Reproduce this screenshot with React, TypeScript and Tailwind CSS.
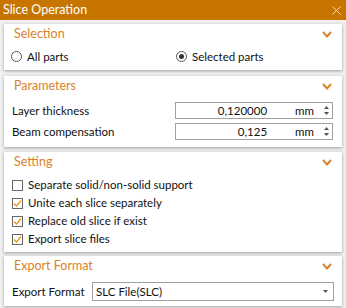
import React from "react";

const Chevron = () => (
  <svg width="10" height="7" viewBox="0 0 10 7" className="block">
    <path d="M1 1 L5 5.5 L9 1" fill="none" stroke="#d9822b" strokeWidth="2" />
  </svg>
);

const Panel = ({ title, children }: { title: string; children: React.ReactNode }) => (
  <div className="mx-[4px] bg-white shadow-[0_1px_3px_rgba(0,0,0,0.35)]">
    <div className="flex items-center justify-between pl-[10px] pr-[10px] h-[20px]">
      <span className="text-[12.5px] text-[#d9822b]">{title}</span>
      <Chevron />
    </div>
    {children}
  </div>
);

const Radio = ({ checked }: { checked?: boolean }) => (
  <span className="w-[11px] h-[11px] rounded-full border border-[#555] flex items-center justify-center bg-white">
    {checked && <span className="w-[5px] h-[5px] rounded-full bg-[#333]" />}
  </span>
);

const Check = ({ checked }: { checked?: boolean }) => (
  <span className="w-[11px] h-[11px] border border-[#666] flex items-center justify-center bg-white">
    {checked && (
      <svg width="9" height="9" viewBox="0 0 9 9">
        <path d="M1 4.5 L3.5 7 L8 1.5" fill="none" stroke="#e8931e" strokeWidth="1.3" />
      </svg>
    )}
  </span>
);

const Spin = () => (
  <div className="flex flex-col items-center gap-[3px] w-[8px]">
    <svg width="5" height="3" viewBox="0 0 5 3"><path d="M0 3 L2.5 0 L5 3Z" fill="#555" /></svg>
    <svg width="5" height="3" viewBox="0 0 5 3"><path d="M0 0 L2.5 3 L5 0Z" fill="#555" /></svg>
  </div>
);

const NumInput = ({ value }: { value: string }) => (
  <div className="w-[158px] h-[17px] border border-[#a0a0a0] flex items-center bg-white">
    <span className="flex-1 text-right">{value}</span>
    <span className="ml-[28px] mr-[8px]">mm</span>
    <Spin />
    <span className="w-[2px]" />
  </div>
);

export default function App() {
  return (
    <div
      className="w-[346px] h-[308px] bg-[#f0f0f0] text-[11.5px] leading-[16px] text-[#111] overflow-hidden"
      style={{ fontFamily: 'Lato, "Open Sans", sans-serif' }}
    >
      <div className="h-[20px] bg-[#c87500] flex items-center justify-between pl-[3px] pr-[5px]">
        <span className="text-white text-[12.5px]">Slice Operation</span>
        <svg width="9" height="9" viewBox="0 0 9 9">
          <path d="M0.5 0.5 L8.5 8.5 M8.5 0.5 L0.5 8.5" stroke="#f5dcb8" strokeWidth="1" />
        </svg>
      </div>

      <div className="flex flex-col pt-[4px]">
        <Panel title="Selection">
          <div className="flex items-center h-[26px] pl-[7px] pb-[1px]">
            <div className="flex items-center gap-[5px] w-[165px]">
              <Radio />
              <span>All parts</span>
            </div>
            <div className="flex items-center gap-[5px]">
              <Radio checked />
              <span>Selected parts</span>
            </div>
          </div>
        </Panel>

        <div className="h-[6px]" />

        <Panel title="Parameters">
          <div className="flex flex-col gap-[4px] pl-[8px] pr-[9px] pt-[6px] pb-[7px]">
            <div className="flex items-center justify-between">
              <span>Layer thickness</span>
              <NumInput value="0,120000" />
            </div>
            <div className="flex items-center justify-between">
              <span>Beam compensation</span>
              <NumInput value="0,125" />
            </div>
          </div>
        </Panel>

        <div className="h-[5px]" />

        <Panel title="Setting">
          <div className="flex flex-col pl-[8px] pt-[4px] pb-[4px]">
            {[
              ["Separate solid/non-solid support", false],
              ["Unite each slice separately", true],
              ["Replace old slice if exist", true],
              ["Export slice files", true],
            ].map(([t, c]) => (
              <div key={t as string} className="flex items-center gap-[5px] h-[18px]">
                <Check checked={c as boolean} />
                <span>{t as string}</span>
              </div>
            ))}
          </div>
        </Panel>

        <div className="h-[4px]" />

        <Panel title="Export Format">
          <div className="flex items-center pl-[8px] pr-[8px] pt-[6px] pb-[5px]">
            <span className="w-[80px]">Export Format</span>
            <div className="flex-1 h-[19px] border border-[#a0a0a0] flex items-center justify-between pl-[3px] pr-[5px]">
              <span>SLC File(SLC)</span>
              <svg width="5" height="3" viewBox="0 0 5 3"><path d="M0 0 L2.5 3 L5 0Z" fill="#555" /></svg>
            </div>
          </div>
        </Panel>
      </div>
    </div>
  );
}
